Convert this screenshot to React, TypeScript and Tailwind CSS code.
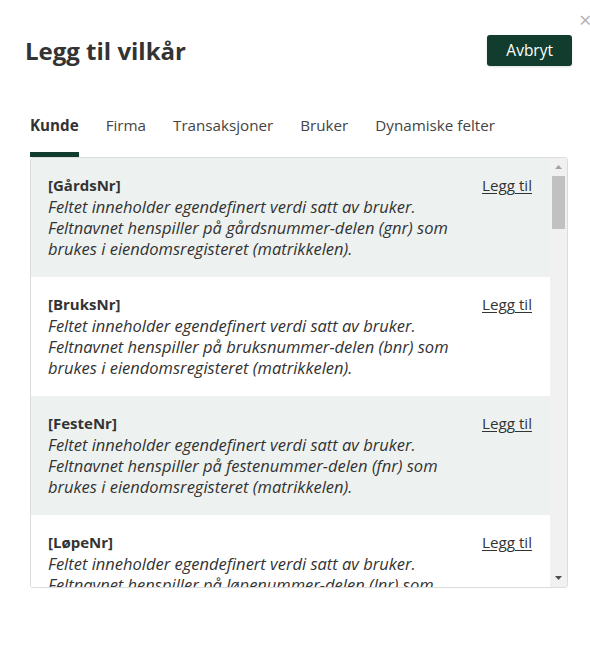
import { useState } from 'react';

interface Field {
  key: string;
  part: string;
}

const FIELDS: Field[] = [
  { key: 'GårdsNr', part: 'gårdsnummer-delen (gnr)' },
  { key: 'BruksNr', part: 'bruksnummer-delen (bnr)' },
  { key: 'FesteNr', part: 'festenummer-delen (fnr)' },
  { key: 'LøpeNr', part: 'løpenummer-delen (lnr)' },
];

const TABS = ['Kunde', 'Firma', 'Transaksjoner', 'Bruker', 'Dynamiske felter'];

function FieldRow({ field, shaded }: { field: Field; shaded: boolean }) {
  return (
    <div className={`flex shrink-0 h-[119px] pl-[17px] pr-[18px] pt-[17px] ${shaded ? 'bg-[#edf2f1]' : 'bg-white'}`}>
      <div className="w-[420px]">
        <div className="text-[15px] leading-[21px] font-bold">[{field.key}]</div>
        <p className="text-[16.5px] leading-[21px] italic">
          Feltet inneholder egendefinert verdi satt av bruker.
          <br />
          Feltnavnet henspiller på {field.part} som brukes i eiendomsregisteret (matrikkelen).
        </p>
      </div>
      <button className="ml-auto self-start text-[15.2px] leading-[21px] underline underline-offset-2 text-[#333]">
        Legg til
      </button>
    </div>
  );
}

export default function App() {
  const [tab, setTab] = useState('Kunde');

  return (
    <div className="relative w-[590px] h-[650px] bg-white text-[#333] font-['Open_Sans',sans-serif] overflow-hidden">
      <span className="absolute left-[579px] top-[8px] text-[22px] leading-none text-[#b5b5b5]">×</span>

      <div className="flex items-center justify-between pl-[25px] pr-[18px] pt-[35px]">
        <h2 className="text-[24px] leading-[31px] font-bold">Legg til vilkår</h2>
        <button className="h-[31px] px-[19px] rounded-[3px] bg-[#123d2e] text-white text-[15.5px] font-medium shadow-sm">
          Avbryt
        </button>
      </div>

      <div className="flex gap-[27px] pl-[30px] mt-[48px]">
        {TABS.map((name) => (
          <button
            key={name}
            onClick={() => setTab(name)}
            className={`pb-[16px] text-[15.2px] leading-[22px] border-b-[5px] ${
              tab === name ? 'font-bold border-[#123d2e]' : 'border-transparent text-[#444]'
            }`}
          >
            {name}
          </button>
        ))}
      </div>

      <div className="ml-[30px] w-[538px] h-[431px] flex border border-[#dcdcdc] rounded-[3px] overflow-hidden">
        <div className="flex-1 flex flex-col overflow-hidden">
          {FIELDS.map((f, i) => (
            <FieldRow key={f.key} field={f} shaded={i % 2 === 0} />
          ))}
        </div>
        <div className="w-[17px] bg-[#f1f1f1] flex flex-col items-center">
          <svg width="9" height="16" viewBox="0 0 9 16" className="mt-[2px]">
            <path d="M1 9 L4.5 5 L8 9 Z" fill="#a3a3a3" />
          </svg>
          <div className="w-[13px] h-[53px] bg-[#c1c1c1]" />
          <svg width="9" height="16" viewBox="0 0 9 16" className="mt-auto mb-[2px]">
            <path d="M1 7 L8 7 L4.5 11 Z" fill="#505050" />
          </svg>
        </div>
      </div>
    </div>
  );
}
